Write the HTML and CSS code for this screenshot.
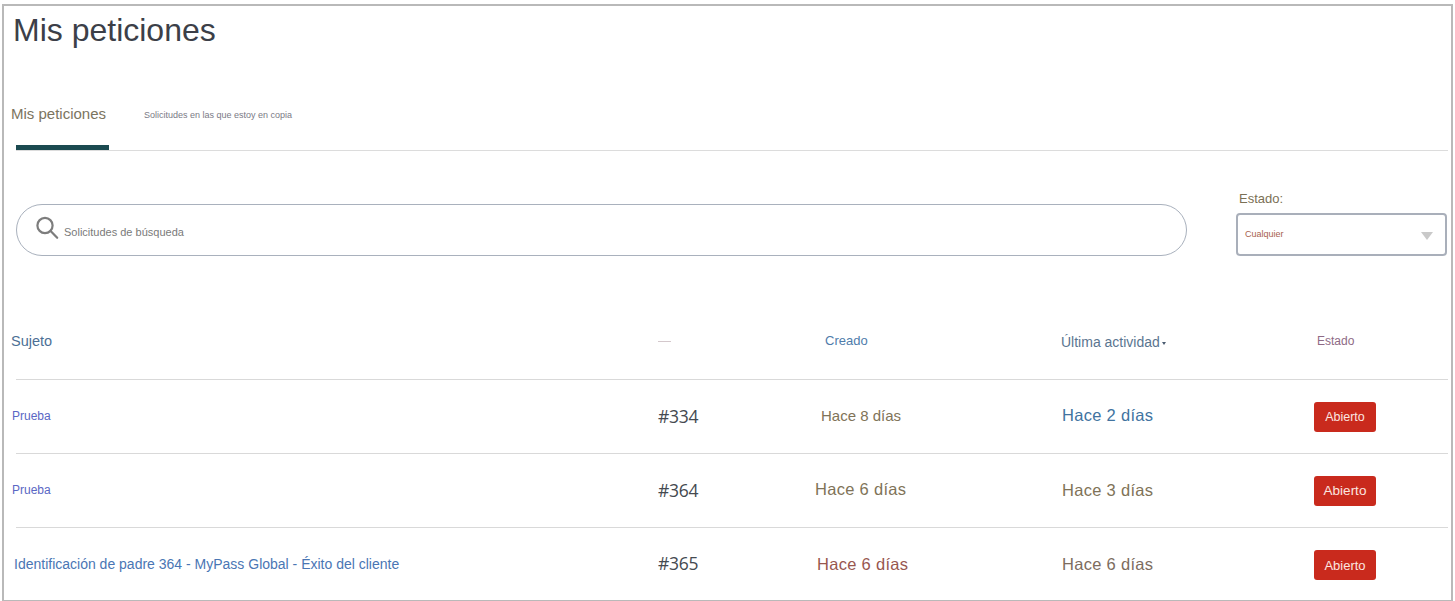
FILE: index.html
```html
<!DOCTYPE html>
<html lang="es">
<head>
<meta charset="utf-8">
<title>Mis peticiones</title>
<link rel="stylesheet" href="styles.css">
</head>
<body>
<main class="frame">
  <h1 class="title">Mis peticiones</h1>
  <nav class="tabs">
    <a class="tab tab-active">Mis peticiones</a>
    <a class="tab tab-small">Solicitudes en las que estoy en copia</a>
  </nav>
  <section class="filters">
    <div class="search">
      <svg class="search-icon" width="24" height="24" viewBox="0 0 24 24" fill="none" stroke="#7d7d7d" stroke-width="2.2" aria-hidden="true">
        <circle cx="10" cy="9.5" r="7.6"/>
        <path d="M15.6 15l6.6 6.8" stroke-linecap="round"/>
      </svg>
      <span class="search-text">Solicitudes de búsqueda</span>
    </div>
    <div class="status-filter">
      <label class="status-label">Estado:</label>
      <div class="select">
        <span class="select-value">Cualquier</span>
        <span class="select-arrow"></span>
      </div>
    </div>
  </section>
  <section class="table">
    <div class="row head">
      <span class="c1 h-subject">Sujeto</span>
      <span class="c2"><i class="dash"></i></span>
      <span class="c3 h-created">Creado</span>
      <span class="c4 h-activity">Última actividad<i class="sort"></i></span>
      <span class="c5 h-status">Estado</span>
    </div>
    <div class="row">
      <a class="c1 subject p1">Prueba</a>
      <span class="c2 id">#334</span>
      <span class="c3 date d1">Hace 8 días</span>
      <span class="c4 date-big blue">Hace 2 días</span>
      <span class="c5"><span class="badge b1">Abierto</span></span>
    </div>
    <div class="row">
      <a class="c1 subject p1">Prueba</a>
      <span class="c2 id">#364</span>
      <span class="c3 date-big raise">Hace 6 días</span>
      <span class="c4 date-big">Hace 3 días</span>
      <span class="c5"><span class="badge">Abierto</span></span>
    </div>
    <div class="row last">
      <a class="c1 subject p3">Identificación de padre 364 - MyPass Global - Éxito del cliente</a>
      <span class="c2 id">#365</span>
      <span class="c3 date-big red">Hace 6 días</span>
      <span class="c4 date-big muted">Hace 6 días</span>
      <span class="c5"><span class="badge b3">Abierto</span></span>
    </div>
  </section>
</main>
</body>
</html>
```

FILE: styles.css
```css
* { box-sizing: border-box; }
html, body { margin: 0; padding: 0; background: #fff; }
body { font-family: "Liberation Sans", Arial, sans-serif; height: 601px; overflow: hidden; }

.frame {
  margin: 4px 2px 0 2px;
  width: 1451px;
  height: 598px;
  border: 2px solid #b9b9b9;
  padding: 0 3px 0 12px;
}

.title {
  margin: 0 0 0 -3px;
  padding-top: 4px;
  font-size: 32px;
  line-height: 41px;
  font-weight: 400;
  color: #3c3f48;
}

.tabs {
  margin-top: 39px;
  height: 61px;
  border-bottom: 1px solid #dcdcdc;
  display: flex;
  gap: 38px;
}
.tab { display: block; }
.tab-active {
  width: 93px;
  height: 60px;
  border-bottom: 5px solid #1b4a50;
  font-size: 15px;
  line-height: 20px;
  padding-top: 14px;
  text-indent: -5px;
  white-space: nowrap;
  color: #7b7460;
}
.tab-small {
  font-size: 9px;
  line-height: 14px;
  padding-top: 18px;
  color: #7a7a86;
  margin-left: -3px;
}

.filters {
  display: flex;
  justify-content: space-between;
  align-items: flex-start;
  margin-top: 39px;
}
.search {
  margin-top: 14px;
  width: 1171px;
  height: 52px;
  border: 1.5px solid #a9b1bd;
  border-radius: 26px;
  display: flex;
  align-items: center;
  padding-left: 18px;
}
.search-icon { margin-top: -4px; }
.search-text { margin: 4px 0 0 5px; font-size: 11px; color: #7a7a7a; }
.status-filter { width: 211px; margin-right: 1px; padding-top: 1px; }
.status-label {
  display: block;
  font-size: 13px;
  line-height: 16px;
  color: #7b7055;
  margin-left: 3px;
}
.select {
  margin-top: 6px;
  height: 43px;
  border: 2px solid #a9afba;
  border-radius: 4px;
  display: flex;
  align-items: center;
  justify-content: space-between;
  padding: 0 12px 0 7px;
}
.select-value { font-size: 9px; margin-top: -2px; color: #a8604e; }
.select-arrow {
  width: 0;
  height: 0;
  margin-top: 2px;
  border-left: 6px solid transparent;
  border-right: 6px solid transparent;
  border-top: 8px solid #c9c9c9;
}

.table { margin-top: 50px; }
.row {
  display: grid;
  grid-template-columns: 642px 157px 246px 252px 134px;
  align-items: center;
  height: 74px;
  border-bottom: 1px solid #d9d9d9;
}
.last { border-bottom: 0; height: 72px; }
.c1, .c2, .c3, .c4, .c5 { display: block; white-space: nowrap; }

.h-subject { font-size: 14.5px; color: #4c6f95; margin-left: -5px; margin-top: -4px; }
.dash { display: block; width: 13px; height: 1px; background: #d4c8cc; margin-top: -2px; }
.h-created { font-size: 13px; color: #4f7cab; padding-left: 10px; margin-top: -5px; }
.h-activity { font-size: 14px; color: #5a7590; margin-top: -2px; }
.sort {
  display: inline-block;
  width: 0; height: 0;
  margin-left: 2px;
  vertical-align: 2px;
  border-left: 2px solid transparent;
  border-right: 2px solid transparent;
  border-top: 3px solid #4a5b70;
}
.h-status { font-size: 12px; color: #8e6a85; padding-left: 4px; margin-top: -3px; }

.subject { font-size: 12px; color: #5a67c4; }
.p1 { margin-left: -4px; margin-top: -2px; }
.p3 { font-size: 14px; margin-left: -2px; color: #4a76b4; }
.id { font-family: "Open Sans", sans-serif; font-size: 17.5px; color: #454a50; letter-spacing: -0.3px; margin-top: -2px; }
.date { font-size: 15px; color: #7f7358; padding-left: 6px; margin-top: -2px; }
.date-big { font-size: 16.5px; color: #7f7358; letter-spacing: .3px; }
.c4.date-big { padding-left: 1px; }
.raise { margin-top: -2px; }
.blue { color: #41739f; margin-top: -2px; }
.red { color: #98574f; padding-left: 2px; }
.muted { color: #7d6c5e; }
.badge {
  display: flex;
  align-items: center;
  justify-content: center;
  width: 62px;
  height: 30px;
  margin-left: 1px;
  border-radius: 3px;
  background: #c92a1d;
  color: #fbe6e0;
  font-size: 13.5px;
}
.b1 { font-size: 12.5px; }
.b3 { margin-top: 2px; font-size: 13px; }
```
